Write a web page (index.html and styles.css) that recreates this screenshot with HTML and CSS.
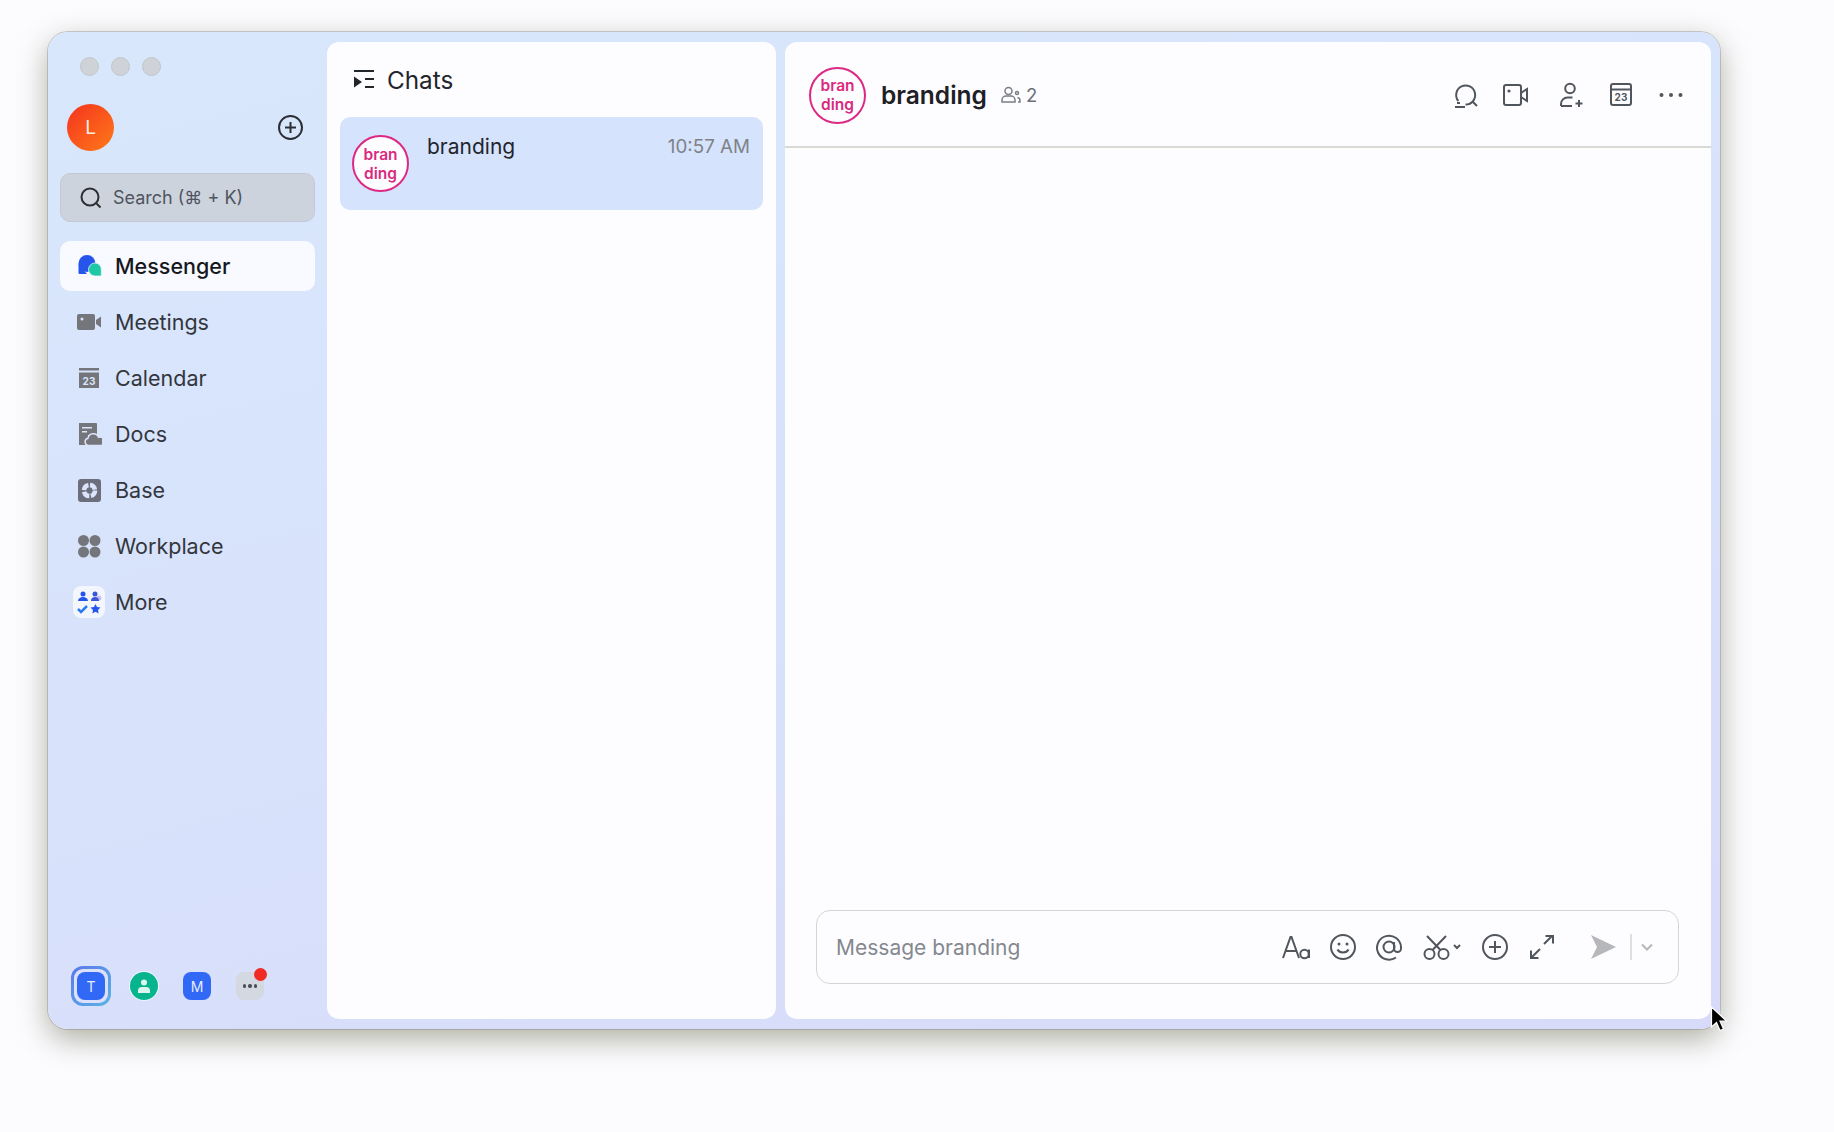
FILE: index.html
```html
<!DOCTYPE html>
<html>

<head>
    <meta charset="utf-8">
    <title>Chats</title>
    <link rel="stylesheet" href="styles.css">
</head>

<body>
    <div class="window">
        <aside class="sidebar">
            <div class="lights"><span></span><span></span><span></span></div>
            <div class="account">
                <div class="me">L</div>
                <svg class="add" width="27" height="27" viewBox="0 0 27 27"><circle cx="13.5" cy="13.5" r="11.5"/><path d="M13.5 8v11M8 13.5h11"/></svg>
            </div>
            <div class="search">
                <svg width="24" height="24" viewBox="0 0 24 24"><circle cx="11" cy="11" r="8.5"/><path d="M17.5 17.5l4 4"/></svg>
                <span>Search (⌘ + K)</span>
            </div>
            <nav class="nav">
                <div class="nav-item active">
                    <svg width="26" height="26" viewBox="0 0 26 26"><circle cx="11" cy="10.500" r="8.500" fill="#2655ec"/><path fill="#2655ec" d="M2.500 11v9a1 1 0 0 0 1 1H11z"/><path fill="#1fc8a5" stroke="#eef3fe" stroke-width=".8" d="M19 10a6.300 6.300 0 0 1 6.300 6.300V23H19a6.500 6.500 0 0 1 0-13z"/></svg>
                    <span>Messenger</span>
                </div>
                <div class="nav-item">
                    <svg width="26" height="26" viewBox="0 0 26 26"><rect x="1" y="5" width="18" height="16" rx="2" fill="#74767c"/><circle cx="6" cy="10" r="1.500" fill="#dbe4fb"/><path fill="#74767c" d="M20 11l5-3.500v11L20 15z"/></svg>
                    <span>Meetings</span>
                </div>
                <div class="nav-item">
                    <svg width="26" height="26" viewBox="0 0 26 26"><path fill="#74767c" d="M3 3h20v2.500H3zM3 7.500h20V23H3z"/><text x="13" y="19.500" class="cal-num" fill="#dbe4fb">23</text></svg>
                    <span>Calendar</span>
                </div>
                <div class="nav-item">
                    <svg width="26" height="26" viewBox="0 0 26 26"><path fill="#74767c" d="M3 2h17a1 1 0 0 1 1 1v11H12v10H3z"/><path fill="#dbe4fb" d="M6 6h10v1.500H6zM6 10h5v1.500H6z"/><path fill="#74767c" stroke="#dbe4fb" stroke-width="1.500" d="M12.500 24.500a3.700 3.700 0 0 1-.5-7.300 5.500 5.500 0 0 1 10.500-1 4.300 4.300 0 0 1 2.500 8.300z"/></svg>
                    <span>Docs</span>
                </div>
                <div class="nav-item">
                    <svg width="26" height="26" viewBox="0 0 26 26"><rect x="2" y="2" width="23" height="23" rx="3" fill="#6c6e7c"/><circle cx="13.500" cy="13.500" r="5.500" fill="none" stroke="#dbe4fb" stroke-width="4.500" stroke-dasharray="7 1.600"/></svg>
                    <span>Base</span>
                </div>
                <div class="nav-item">
                    <svg width="26" height="26" viewBox="0 0 26 26" fill="#74767c"><circle cx="7.500" cy="7.500" r="5.500"/><circle cx="19" cy="7.500" r="5.500"/><circle cx="7.500" cy="19" r="5.500"/><circle cx="19" cy="19" r="5.500"/></svg>
                    <span>Workplace</span>
                </div>
                <div class="nav-item">
                    <svg class="more-icon" width="32" height="32" viewBox="0 0 32 32"><rect width="32" height="32" rx="8" fill="#f4f6fe"/><circle cx="10" cy="8" r="2.500" fill="#2655ec"/><path fill="#2655ec" d="M5 15a5 4 0 0 1 10 0z"/><circle cx="26" cy="12" r="2.500" fill="#cdbdf5"/><circle cx="22" cy="8" r="2.500" fill="#3b55d8"/><path fill="#3b55d8" d="M18 15a4 4 0 0 1 8 0z"/><path fill="none" stroke="#2a7bf0" stroke-width="2.500" d="M5 23l3 3 6-6"/><path fill="#2655ec" d="M22.500 18l1.500 3 3.500.5-2.500 2.500.6 3.500-3.100-1.700-3.100 1.700.6-3.500-2.500-2.500 3.500-.5z"/></svg>
                    <span>More</span>
                </div>
            </nav>
            <div class="tenants">
                <div class="tenant-ring"><div class="tenant">T</div></div>
                <div class="tenant-user">
                    <svg width="16" height="16" viewBox="0 0 16 16" fill="#dcf7ef"><circle cx="8" cy="4.500" r="3"/><path d="M2 15v-2a4 4 0 0 1 4-4h4a4 4 0 0 1 4 4v2z"/></svg>
                </div>
                <div class="tenant tenant-m">M</div>
                <div class="tenant-more"><i></i><i></i><i></i><b></b></div>
            </div>
        </aside>

        <section class="list">
            <header class="list-head">
                <svg width="22" height="22" viewBox="0 0 22 22"><path d="M1 2h20M12 10h9M12 18h9" stroke="#22252b" stroke-width="2.200" fill="none"/><path d="M1 7.500l8 5.500-8 5.500z" fill="#22252b"/></svg>
                <h2>Chats</h2>
            </header>
            <div class="row">
                <div class="group-pic">bran<br>ding</div>
                <div class="row-name">branding</div>
                <div class="row-time">10:57 AM</div>
            </div>
        </section>

        <main class="chat">
            <header class="chat-head">
                <div class="group-pic">bran<br>ding</div>
                <h1>branding</h1>
                <div class="members">
                    <svg width="20" height="18" viewBox="0 0 20 18"><circle cx="7.500" cy="5" r="3.500"/><path d="M1 16v-2a4 4 0 0 1 4-4h5a4 4 0 0 1 4 4v2z"/><circle cx="16" cy="7" r="1.500"/><path d="M16.500 11.500a3 3 0 0 1 2.500 3V16h-2"/></svg>
                    <span>2</span>
                </div>
                <div class="head-tools">
                    <svg width="26" height="26" viewBox="0 0 26 26"><path d="M5.300 19A9.500 9.500 0 1 1 12.500 22.500"/><path d="M19.500 19.500l4.500 4.500M4 21h3M2 25h10"/></svg>
                    <svg width="26" height="26" viewBox="0 0 26 26"><rect x="1" y="3" width="17" height="20" rx="2"/><circle cx="6" cy="9" r="1.600" class="fill"/><path d="M18 11l6-4v12l-6-4"/></svg>
                    <svg class="tool-person" width="26" height="26" viewBox="0 0 26 26"><circle cx="11" cy="6.500" r="4.800"/><path d="M2 24v-2a6.500 6.500 0 0 1 6.500-6.500h5M2 24h11M20 18v7M16.500 21.500h7"/></svg>
                    <svg width="24" height="26" viewBox="0 0 24 26"><rect x="2" y="2" width="20" height="21" rx="2"/><path d="M2 7.500h20"/><text x="12" y="19" class="cal-num small">23</text></svg>
                    <svg class="tool-dots" width="24" height="26" viewBox="0 0 24 26"><circle cx="2.500" cy="13" r="2" class="fill"/><circle cx="12" cy="13" r="2" class="fill"/><circle cx="21.500" cy="13" r="2" class="fill"/></svg>
                </div>
            </header>
            <div class="messages"></div>
            <div class="composer">
                <span class="placeholder">Message branding</span>
                <div class="composer-tools">
                    <svg width="30" height="28" viewBox="0 0 30 28"><path d="M2 25L9.500 4h1L18 25M4.500 18h11"/><circle cx="23.500" cy="21" r="4.200"/><path d="M28 16.500V25"/></svg>
                    <svg width="28" height="28" viewBox="0 0 28 28"><circle cx="14" cy="14" r="12"/><circle cx="10" cy="11" r="1.500" class="fill"/><circle cx="18" cy="11" r="1.500" class="fill"/><path d="M8.500 16.500c2 4 9 4 11 0"/></svg>
                    <svg width="28" height="28" viewBox="0 0 28 28"><path d="M21 24.500A12 12 0 1 1 26 14v1.500a3.500 3.500 0 0 1-7 0V9"/><circle cx="14" cy="14" r="5.500"/></svg>
                    <svg class="tool-cut" width="38" height="28" viewBox="0 0 38 28"><circle cx="6.500" cy="21" r="5"/><circle cx="20.500" cy="21" r="5"/><path d="M9.500 17L23 3M17.500 17L4 3M31 12l3 3 3-3"/></svg>
                    <svg class="tool-plus" width="28" height="28" viewBox="0 0 28 28"><circle cx="14" cy="14" r="12"/><path d="M14 8v12M8 14h12"/></svg>
                    <svg class="tool-expand" width="24" height="24" viewBox="0 0 24 24"><path d="M14 9l8-8M15.500 1H23v7.500M10 14l-8 8M1 15.500V23h7.500"/></svg>
                </div>
                <div class="send">
                    <svg width="26" height="26" viewBox="0 0 26 26"><path d="M1 1l25 12L1 25l6-12z" fill="#b5b7bb"/></svg>
                    <i></i>
                    <svg class="send-more" width="12" height="8" viewBox="0 0 12 8"><path d="M1 1.500l5 5 5-5"/></svg>
                </div>
            </div>
        </main>
    </div>

    <svg class="cursor" width="18" height="28" viewBox="0 0 18 28"><path d="M1.500 1v20l5-4.500 3.500 8 3.500-1.500-3.500-8h6.500z" fill="#000" stroke="#fff" stroke-width="1.200"/></svg>
</body>

</html>
```

FILE: styles.css
```css
* {
    box-sizing: border-box;
}

html, body {
    margin: 0;
    height: 100%;
}

body {
    background: #fcfcff;
    font-family: Inter, "Noto Sans", sans-serif;
    color: #22252b;
    overflow: hidden;
    padding: 32px 0 0 48px;
}

.window {
    width: 1672px;
    height: 997px;
    display: flex;
    padding: 10px 9px 10px 0;
    border-radius: 20px;
    background: linear-gradient(165deg, #d8e7fc 0%, #d8e2fb 55%, #d8daf9 100%);
    box-shadow: 0 0 0 1px rgba(120, 120, 120, .35), 0 10px 30px rgba(90, 90, 60, .48);
}

/* sidebar */
.sidebar {
    width: 279px;
    flex: none;
    display: flex;
    flex-direction: column;
    padding: 0 12px 0 12px;
}

.lights {
    display: flex;
    gap: 12px;
    padding: 15px 0 0 20px;
}

.lights span {
    width: 19px;
    height: 19px;
    border-radius: 50%;
    background: #cfd2d6;
    border: 1px solid #c2c6cc;
}

.account {
    display: flex;
    align-items: center;
    justify-content: space-between;
    margin-top: 28px;
    padding: 0 11px 0 7px;
}

.me {
    width: 47px;
    height: 47px;
    border-radius: 50%;
    background: linear-gradient(135deg, #f4331f, #ff7a18);
    color: #fdeee2;
    font-size: 19px;
    display: flex;
    align-items: center;
    justify-content: center;
}

.add circle, .add path, .search svg * {
    fill: none;
    stroke: #2b2e33;
    stroke-width: 2;
}

.search {
    height: 49px;
    margin-top: 22px;
    display: flex;
    align-items: center;
    gap: 10px;
    padding-left: 18px;
    background: #cdd3dd;
    border: 1px solid #c3c9d4;
    border-radius: 10px;
    font-size: 18px;
    color: #4f5560;
}

.nav {
    margin-top: 19px;
    display: flex;
    flex-direction: column;
    gap: 6px;
}

.nav-item {
    height: 50px;
    display: flex;
    align-items: center;
    gap: 13px;
    padding-left: 16px;
    border-radius: 10px;
    font-size: 21.500px;
    color: #33363c;
}

.nav-item svg {
    flex: none;
}

.nav-item.active {
    background: #f8faff;
    color: #16181d;
    font-weight: 500;
}

.more-icon {
    margin: 0 -3px;
}

.cal-num {
    font-size: 10px;
    font-weight: 700;
    text-anchor: middle;
    font-family: Inter, sans-serif;
}

.cal-num.small {
    font-size: 10px;
    fill: #51565d;
    stroke: none;
}

.tenants {
    margin-top: auto;
    margin-bottom: 13px;
    margin-left: -1px;
    height: 40px;
    padding-left: 12px;
    display: flex;
    align-items: center;
}

.tenant-ring {
    width: 40px;
    height: 40px;
    border-radius: 12px;
    border: 3px solid transparent;
    background: linear-gradient(#dde0fb, #dde0fb) padding-box, linear-gradient(135deg, #5a78ea, #5bb4e6) border-box;
    display: flex;
    align-items: center;
    justify-content: center;
}

.tenant {
    width: 28px;
    height: 28px;
    flex: none;
    border-radius: 8px;
    background: #3168f5;
    color: #e6edff;
    font-size: 14px;
    display: flex;
    align-items: center;
    justify-content: center;
}

.tenant-user {
    width: 28px;
    height: 28px;
    margin-left: 19px;
    border-radius: 50%;
    background: #07b48e;
    box-shadow: 0 0 0 1px #f3f6fe;
    display: flex;
    align-items: center;
    justify-content: center;
}

.tenant-m {
    margin-left: 25px;
}

.tenant-more {
    position: relative;
    width: 28px;
    height: 28px;
    margin-left: 25px;
    border-radius: 8px;
    background: #d3d8e1;
    display: flex;
    align-items: center;
    justify-content: center;
    gap: 2px;
}

.tenant-more i {
    width: 3.500px;
    height: 3.500px;
    border-radius: 50%;
    background: #4b4f56;
}

.tenant-more b {
    position: absolute;
    top: -4px;
    right: -3px;
    width: 13px;
    height: 13px;
    border-radius: 50%;
    background: #ef2b24;
}

/* chat list */
.list {
    width: 449px;
    flex: none;
    background: #fdfdff;
    border-radius: 12px;
    padding: 0 13px;
}

.list-head {
    height: 75px;
    display: flex;
    align-items: center;
    gap: 12px;
    padding-left: 13px;
}

.list-head h2 {
    margin: 0;
    font-size: 24.300px;
    font-weight: 400;
}

.row {
    height: 93px;
    display: flex;
    padding: 18px 13px 0 12px;
    background: #d6e3fd;
    border-radius: 10px;
}

.group-pic {
    width: 57px;
    height: 57px;
    flex: none;
    border: 2px solid #dc2a84;
    border-radius: 50%;
    background: #fdfdff;
    color: #d92a80;
    font-size: 15.500px;
    font-weight: 600;
    line-height: 19px;
    text-align: center;
    display: flex;
    align-items: center;
    justify-content: center;
}

.row-name {
    margin: -3px 0 0 18px;
    font-size: 21px;
    line-height: 30px;
    flex: 1;
}

.row-time {
    margin-top: -3px;
    font-size: 18.800px;
    line-height: 30px;
    color: #7e8288;
}

/* chat pane */
.chat {
    margin-left: 9px;
    flex: 1;
    display: flex;
    flex-direction: column;
    background: #fdfdff;
    border-radius: 12px;
}

.chat-head {
    height: 106px;
    flex: none;
    display: flex;
    align-items: center;
    padding: 2px 28px 0 24px;
    border-bottom: 2px solid #d9d9d6;
}

.chat-head h1 {
    margin: 0 0 0 15px;
    font-size: 24.500px;
    font-weight: 600;
    color: #1d2025;
}

.members {
    margin-left: 14px;
    display: flex;
    align-items: center;
    gap: 5px;
    font-size: 18.500px;
    color: #6c7078;
}

.members svg *, .head-tools svg *, .composer-tools svg *, .send-more path {
    fill: none;
    stroke: #51565d;
    stroke-width: 2;
}

.members svg * {
    stroke-width: 1.500;
    stroke: #7a7e86;
}

.head-tools svg .fill, .composer-tools svg .fill {
    fill: #51565d;
    stroke: none;
}

.head-tools text.cal-num {
    fill: #51565d;
    stroke: none;
    stroke-width: 0;
}

.head-tools {
    margin-left: auto;
    display: flex;
    align-items: center;
    gap: 24px;
}

.tool-person {
    margin-left: 6px;
}

.tool-dots {
    margin-left: 2px;
}

.messages {
    flex: 1;
}

.composer {
    height: 74px;
    flex: none;
    margin: 0 32px 35px 31px;
    border: 1px solid #d5d5d5;
    border-radius: 14px;
    display: flex;
    align-items: center;
    padding: 0 25px 0 19px;
}

.placeholder {
    flex: 1;
    font-size: 21px;
    color: #84888f;
}

.composer-tools {
    display: flex;
    align-items: center;
    gap: 18px;
}

.tool-cut, .tool-plus {
    margin-left: 2px;
}

.tool-expand {
    margin-left: 3px;
}

.send {
    margin-left: 36px;
    display: flex;
    align-items: center;
}

.send i {
    width: 2px;
    height: 26px;
    margin-left: 14px;
    background: #dedfe1;
}

.send-more {
    margin-left: 9px;
}

.send-more path {
    stroke: #b5b7bb;
}

.cursor {
    position: absolute;
    left: 1710px;
    top: 1006px;
}
```
